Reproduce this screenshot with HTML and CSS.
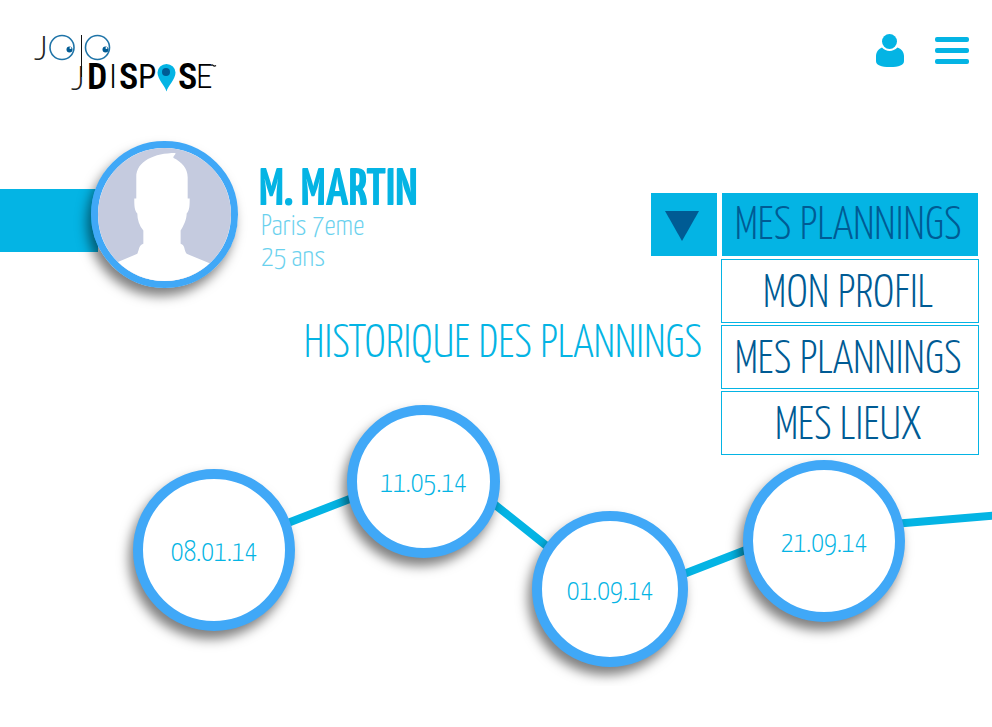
FILE: index.html
```html
<!DOCTYPE html>
<html lang="fr">
<head>
<meta charset="utf-8">
<meta name="viewport" content="width=device-width, initial-scale=1">
<title>Jojo Dispose</title>
<link rel="stylesheet" href="styles.css">
</head>
<body>
<header class="topbar">
  <a class="logo" href="#" aria-label="Jojo Dispose">
    <svg width="184" height="60" viewBox="34 34 184 60">
      <g class="logo-thin">
        <text class="logo-j" x="34" y="60">J</text>
        <text class="logo-j" x="71" y="90">J</text>
      </g>
      <rect x="81" y="35" width="1" height="42" fill="#111"/>
      <g fill="none" stroke="#1f74a8" stroke-width="1.6">
        <circle cx="62" cy="47.500" r="12"/>
        <circle cx="97.500" cy="47.500" r="12"/>
      </g>
      <g fill="#005b94">
        <circle cx="69.500" cy="49.500" r="3"/>
        <circle cx="105.500" cy="49.500" r="3"/>
      </g>
      <g fill="#fff">
        <circle cx="70.500" cy="48" r="1"/>
        <circle cx="106.500" cy="48" r="1"/>
      </g>
      <text class="logo-bold" x="87" y="89">D</text>
      <text class="logo-light" x="109" y="88">I</text>
      <text class="logo-bold" x="119" y="89">S</text>
      <text class="logo-medium" x="138" y="88">P</text>
      <text class="logo-bold" x="178" y="89">S</text>
      <text class="logo-light" x="196" y="88">E</text>
      <path d="M166.500 91.500c-1.500-6-9-12-9-19a9 8.600 0 0 1 18 0c0 7-7.500 13-9 19z" fill="#04b4e4"/>
      <circle cx="166" cy="72" r="4" fill="#005b94"/>
      <path d="M211 65.500q1-1.200 2.200 0t2.800 0" fill="none" stroke="#111" stroke-width="1.300"/>
    </svg>
  </a>
  <nav class="actions">
    <button class="icon-button" type="button" aria-label="Mon compte">
      <svg width="28" height="33" viewBox="0 0 28 33" fill="#04b4e4">
        <circle cx="13.500" cy="7.500" r="7.500"/>
        <path d="M6 13.500c4 4.600 11 4.600 15.500 0C26 15 28 18.500 28 22v5c0 4-5 6-14 6S0 31 0 27v-5c0-3.500 2-7 6-8.500z"/>
      </svg>
    </button>
    <button class="icon-button" type="button" aria-label="Menu">
      <svg width="34" height="27" viewBox="0 0 34 27" fill="#04b4e4">
        <rect width="34" height="5" rx="2"/>
        <rect y="11" width="34" height="5" rx="2"/>
        <rect y="22" width="34" height="5" rx="2"/>
      </svg>
    </button>
  </nav>
</header>

<main>
  <section class="profile">
    <div class="band"></div>
    <div class="avatar">
      <svg viewBox="0 0 132 132" role="img" aria-label="Photo de profil">
        <rect width="132" height="132" fill="#c5cbdf"/>
        <path d="M18 114l21-9c2-4 1-8 6-10V82c-4-5-6-11-6-17-3-3-3-9-3-15h2V29C38 13 56 5 77 5c0 2-3 3-2 5 8 4 14 10 14 19v21h2c0 6 0 12-3 15 0 6-3 12-6 17v13c5 2 3 6 6 10l24 10v20H18z" fill="#fff"/>
      </svg>
    </div>
    <div class="identity">
      <h1>M. MARTIN</h1>
      <p>Paris 7eme</p>
      <p>25 ans</p>
    </div>
    <div class="dropdown">
      <button class="toggle" type="button" aria-label="Ouvrir le menu">
        <svg width="34" height="30" viewBox="0 0 34 30"><path d="M0 0h34L17 30z" fill="#005b94"/></svg>
      </button>
      <div class="choices">
        <button class="current" type="button">MES PLANNINGS</button>
        <ul class="menu">
          <li><a href="#">MON PROFIL</a></li>
          <li><a href="#">MES PLANNINGS</a></li>
          <li><a href="#">MES LIEUX</a></li>
        </ul>
      </div>
    </div>
  </section>

  <h2>HISTORIQUE DES PLANNINGS</h2>

  <section class="timeline">
    <svg class="links" width="992" height="300" stroke="#04b4e4" stroke-width="8">
      <path d="M280 140l80-31M484 110l74 59M676 191l80-31M893 138l107-9"/>
    </svg>
    <a class="node node-1" href="#">08.01.14</a>
    <a class="node node-2" href="#">11.05.14</a>
    <a class="node node-3" href="#">01.09.14</a>
    <a class="node node-4" href="#">21.09.14</a>
  </section>
</main>
</body>
</html>
```
FILE: styles.css
```css
:root {
  --cyan: #04b4e4;
  --navy: #005b94;
  --ring: #40a8f7;
  --shadow: -4px 8px 12px rgba(0, 0, 0, .5);
}

* { box-sizing: border-box; }

body {
  margin: 0;
  background: #fff;
  color: var(--cyan);
  font-family: "Yanone Kaffeesatz", "Open Sans Condensed", "Roboto Condensed", sans-serif;
  font-weight: 300;
  overflow-x: hidden;
}

h1, h2, p, ul { margin: 0; padding: 0; }
a { color: inherit; text-decoration: none; }
button { border: 0; padding: 0; background: none; font: inherit; cursor: pointer; }
svg { display: block; overflow: visible; }

.topbar {
  display: flex;
  justify-content: space-between;
  align-items: flex-start;
  padding: 34px 23px 0 34px;
}

.actions { display: flex; align-items: flex-start; gap: 31px; }
.actions .icon-button:last-child { padding-top: 3px; }

.logo-thin { font-family: Lato, sans-serif; font-weight: 300; fill: #222; }
.logo-j { font-size: 34px; }
.logo-bold { font: 600 36px "Roboto Condensed", sans-serif; }
.logo-medium { font: 400 33px "Roboto Condensed", sans-serif; }
.logo-light { font: 300 33px "Roboto Condensed", sans-serif; }

.profile {
  display: flex;
  align-items: center;
  padding: 47px 14px 0 0;
}

.band { width: 98px; height: 63px; margin-top: 12px; background: var(--cyan); }

.avatar {
  width: 147px;
  height: 147px;
  margin-left: -7px;
  border: 7px solid var(--ring);
  border-radius: 50%;
  box-shadow: var(--shadow);
}
.avatar svg { width: 100%; border-radius: 50%; overflow: hidden; }

.identity { margin: 8px 0 0 21px; font-size: 29px; line-height: 31px; }
.identity p { padding-left: 2px; opacity: .6; }
.identity h1 { padding-top: 6px; font-size: 52px; font-weight: 700; line-height: 42px; }

.dropdown { display: flex; gap: 5px; margin-left: auto; margin-top: 20px; }

.toggle {
  display: grid;
  place-items: center;
  width: 66px;
  height: 63px;
  padding: 2px 4px 0 0;
  background: var(--cyan);
}

.choices {
  position: relative;
  width: 256px;
  color: var(--navy);
  font-size: 47px;
}

.current {
  width: 100%;
  height: 63px;
  padding: 4px 4px 0 0;
  background: var(--cyan);
  color: var(--navy);
  line-height: 59px;
}

.menu {
  position: absolute;
  z-index: 2;
  top: 66px;
  left: -1px;
  right: -1px;
  display: grid;
  gap: 2px;
  list-style: none;
}

.menu a {
  display: block;
  padding: 6px 4px 0 0;
  border: 1px solid var(--cyan);
  background: #fff;
  line-height: 56px;
  height: 64px;
  text-align: center;
}

h2 {
  margin-top: 26px;
  padding-left: 14px;
  font-size: 47px;
  font-weight: 300;
  line-height: 60px;
  text-align: center;
}

.timeline { position: relative; height: 300px; margin-top: 12px; }
.links { position: absolute; inset: 0; }

.node {
  position: absolute;
  display: grid;
  place-items: center;
  aspect-ratio: 1;
  padding-top: 6px;
  border: 10px solid var(--ring);
  border-radius: 50%;
  background: #fff;
  box-shadow: var(--shadow);
  font-size: 29px;
}

.node-1 { left: 133px; top: 83px; width: 162px; }
.node-2 { left: 347px; top: 19px; width: 153px; }
.node-3 { left: 532px; top: 125px; width: 156px; }
.node-4 { left: 743px; top: 74px; width: 162px; }
```
